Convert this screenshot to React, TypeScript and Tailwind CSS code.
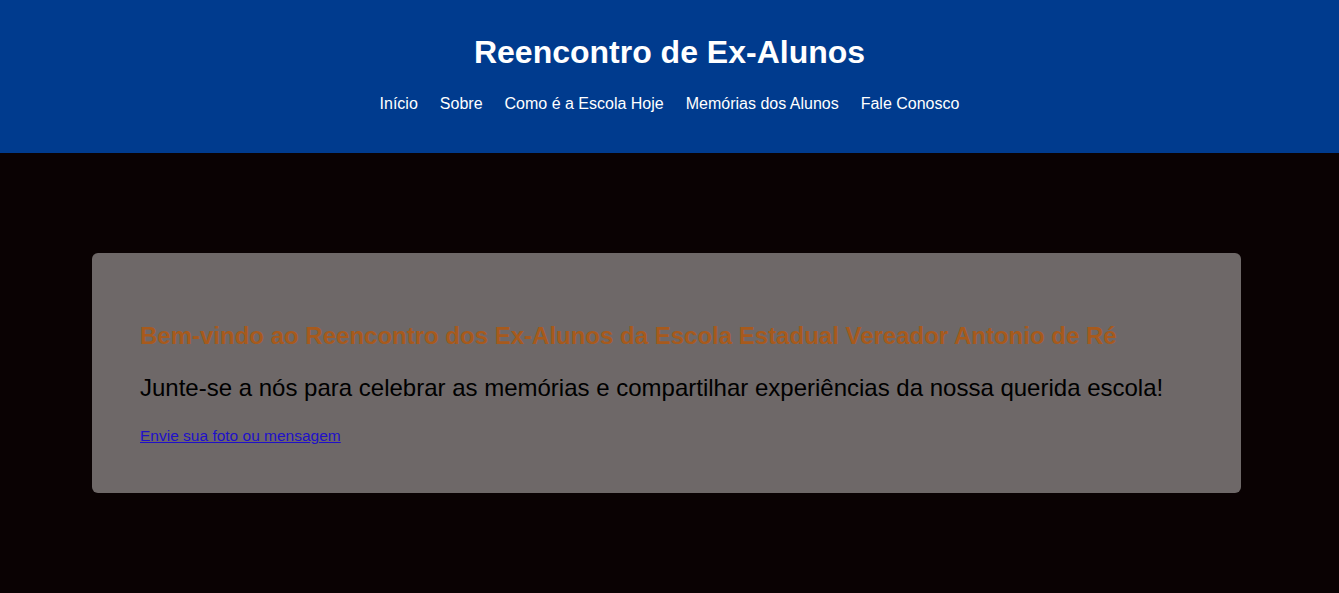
export default function App() {
  const nav = ["Início", "Sobre", "Como é a Escola Hoje", "Memórias dos Alunos", "Fale Conosco"];
  return (
    <div className="min-h-[593px] bg-[#0a0203] font-['Liberation_Sans',Arial,sans-serif]">
      <header className="flex h-[153px] flex-col items-center bg-[#003b8e] pt-[33px] text-white">
        <h1 className="text-[32px] font-bold leading-[38px]">Reencontro de Ex-Alunos</h1>
        <nav className="mt-[23px] flex gap-[22px] text-[16px] leading-[20px]">
          {nav.map((n) => (
            <a key={n} href="#" className="text-white">{n}</a>
          ))}
        </nav>
      </header>
      <main className="pt-[100px]">
        <section className="ml-[92px] h-[240px] w-[1149px] rounded-[6px] bg-[#6e6868] px-[48px] pt-[69px]">
          <h2 className="text-[24px] font-bold leading-[28px] text-[#a75a1c]">
            Bem-vindo ao Reencontro dos Ex-Alunos da Escola Estadual Vereador Antonio de Ré
          </h2>
          <p className="mt-[24px] text-[24px] leading-[28px] text-black">
            Junte-se a nós para celebrar as memórias e compartilhar experiências da nossa querida escola!
          </p>
          <a href="#" className="mt-[24px] inline-block text-[15.5px] leading-[20px] text-[#2010c8] underline">
            Envie sua foto ou mensagem
          </a>
        </section>
      </main>
    </div>
  );
}
